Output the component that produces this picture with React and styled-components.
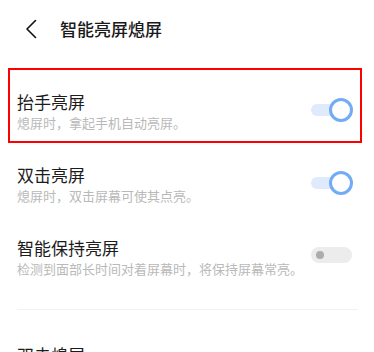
import React from "react";
import styled, { createGlobalStyle } from "styled-components";

const Global = createGlobalStyle`
  html, body { margin: 0; padding: 0; background: #fff; }
  body {
    font-family: "Noto Sans CJK SC", "Noto Sans", sans-serif;
    -webkit-font-smoothing: antialiased;
  }
`;

const Page = styled.div`
  width: 374px;
  height: 352px;
  overflow: hidden;
  background: #fff;
`;

const Header = styled.header`
  height: 58px;
  display: flex;
  align-items: center;
  padding-left: 24px;
  gap: 23px;
`;

const Back = styled.button`
  border: 0;
  background: none;
  padding: 0;
  width: 13px;
  height: 20px;
  display: flex;
  align-items: center;
  justify-content: center;
`;

const Title = styled.h1`
  margin: 0;
  font-size: 17px;
  line-height: 22px;
  font-weight: 500;
  color: #1a1a1a;
  letter-spacing: 0;
`;

const List = styled.div`
  padding-top: 17px;
`;

const Row = styled.div`
  position: relative;
  height: 73px;
  display: flex;
  align-items: center;
  justify-content: space-between;
  padding: 0 22px 0 17px;
  box-sizing: border-box;

  ${(p) =>
    p.$highlight &&
    `
    &::after {
      content: "";
      position: absolute;
      left: 8px;
      right: 12px;
      top: -7px;
      bottom: 5px;
      border: 2px solid #ff0000;
      pointer-events: none;
    }
  `}
`;

const Texts = styled.div`
  display: flex;
  flex-direction: column;
`;

const ItemTitle = styled.div`
  font-size: 17px;
  line-height: 22px;
  color: #1c1c1c;
`;

const ItemDesc = styled.div`
  font-size: 13px;
  line-height: 19px;
  color: #b9b9b9;
`;

const Switch = styled.div`
  position: relative;
  width: 41px;
  height: ${(p) => (p.$on ? 12 : 16)}px;
  border-radius: 8px;
  background: ${(p) => (p.$on ? "#dfeafc" : "#ececec")};
  margin-bottom: ${(p) => (p.$on ? 4 : 6)}px;
  flex-shrink: 0;
`;

const Knob = styled.span`
  position: absolute;
  top: 50%;
  transform: translateY(-50%);
  ${(p) =>
    p.$on
      ? `
    right: -1px;
    width: 18px;
    height: 18px;
    border-radius: 50%;
    border: 3px solid #73acf5;
    background: #fff;
  `
      : `
    left: 5px;
    width: 8px;
    height: 8px;
    border-radius: 50%;
    background: #acacac;
  `}
`;

const Divider = styled.div`
  margin: 15px 16px 0 17px;
  height: 1px;
  background: #f2f2f2;
`;

const Section = styled.div`
  padding: 34px 17px 0;
`;

const items = [
  { title: "抬手亮屏", desc: "熄屏时，拿起手机自动亮屏。", on: true, highlight: true },
  { title: "双击亮屏", desc: "熄屏时，双击屏幕可使其点亮。", on: true },
  { title: "智能保持亮屏", desc: "检测到面部长时间对着屏幕时，将保持屏幕常亮。", on: false },
];

export default function App() {
  return (
    <Page>
      <Global />
      <Header>
        <Back aria-label="返回">
          <svg width="12" height="20" viewBox="0 0 12 20" fill="none">
            <path d="M10.5 1.5 L2 10 L10.5 18.5" stroke="#111" strokeWidth="1.6" strokeLinecap="round" strokeLinejoin="round" />
          </svg>
        </Back>
        <Title>智能亮屏熄屏</Title>
      </Header>
      <List>
        {items.map((it) => (
          <Row key={it.title} $highlight={it.highlight}>
            <Texts>
              <ItemTitle>{it.title}</ItemTitle>
              <ItemDesc>{it.desc}</ItemDesc>
            </Texts>
            <Switch $on={it.on}>
              <Knob $on={it.on} />
            </Switch>
          </Row>
        ))}
        <Divider />
        <Section>
          <ItemTitle>双击熄屏</ItemTitle>
        </Section>
      </List>
    </Page>
  );
}
